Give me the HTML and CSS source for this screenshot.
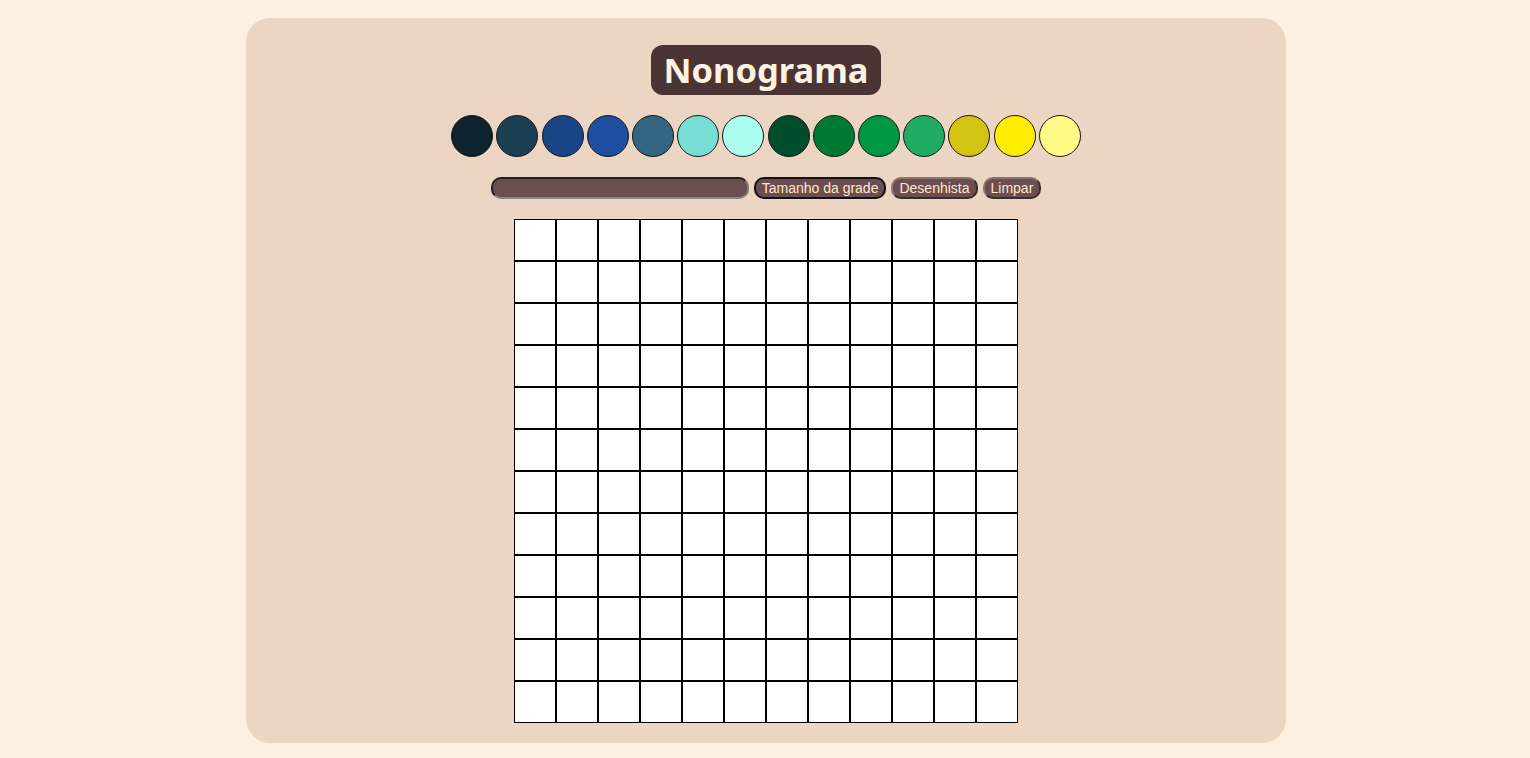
FILE: index.html
```html
<!DOCTYPE html>
<html lang="pt">
<head>
<meta charset="utf-8">
<title>Nonograma</title>
<link rel="stylesheet" href="styles.css">
</head>
<body>
<main class="app">
  <h1 class="title">Nonograma</h1>
  <div class="palette">
    <span class="swatch c1"></span><span class="swatch c2"></span><span class="swatch c3"></span><span class="swatch c4"></span><span class="swatch c5"></span><span class="swatch c6"></span><span class="swatch c7"></span><span class="swatch c8"></span><span class="swatch c9"></span><span class="swatch c10"></span><span class="swatch c11"></span><span class="swatch c12"></span><span class="swatch c13"></span><span class="swatch c14"></span>
  </div>
  <div class="controls">
    <input class="size-input" type="text">
    <button class="btn btn-active">Tamanho da grade</button>
    <button class="btn">Desenhista</button>
    <button class="btn">Limpar</button>
  </div>
  <div class="board" id="board"></div>
</main>
<script>
  var b = document.getElementById('board');
  for (var i = 0; i < 144; i++) { var d = document.createElement('div'); d.className = 'cell'; b.appendChild(d); }
</script>
</body>
</html>
```
FILE: styles.css
```css
html, body { margin: 0; padding: 0; }
body {
  background: #fef0e1;
  font-family: "Liberation Sans", Arial, sans-serif;
  padding-top: 18px;
}
.app {
  width: 1040px;
  height: 725px;
  margin: 0 auto 0 246px;
  background: #edd5c4;
  border-radius: 24px;
  display: flex;
  flex-direction: column;
  align-items: center;
  box-sizing: border-box;
  padding-top: 27px;
}
.title {
  margin: 0;
  background: #4a3434;
  color: #fff2e2;
  font-family: "Noto Sans", "Open Sans", sans-serif;
  font-weight: 700;
  font-size: 34.5px;
  line-height: 50px;
  height: 50px;
  padding: 0 12px;
  border-radius: 12px;
}
.palette {
  display: flex;
  gap: 3.2px;
  margin-top: 20px;
}
.swatch {
  width: 40px;
  height: 40px;
  border-radius: 50%;
  border: 1px solid #1a1a1a;
  display: block;
}
.c1 { background: #0d2330; }
.c2 { background: #1c3e52; }
.c3 { background: #174585; }
.c4 { background: #1e4e9e; }
.c5 { background: #336580; }
.c6 { background: #76ded4; }
.c7 { background: #aafdef; }
.c8 { background: #004d2c; }
.c9 { background: #017935; }
.c10 { background: #009744; }
.c11 { background: #21ac64; }
.c12 { background: #d2c413; }
.c13 { background: #ffed00; }
.c14 { background: #fffb87; }
.controls {
  display: flex;
  align-items: center;
  gap: 5px;
  margin-top: 20px;
}
.size-input {
  width: 258px;
  height: 22px;
  box-sizing: border-box;
  background: #6b4e4e;
  border: 2px solid #222;
  border-right-color: #777;
  border-bottom-color: #888;
  border-radius: 10px;
  padding: 0;
}
.btn {
  height: 22px;
  box-sizing: border-box;
  background: #6b4e4e;
  color: #ffe6d4;
  font-family: "Liberation Sans", Arial, sans-serif;
  font-size: 14px;
  line-height: 16px;
  padding: 0 6px;
  border: 2px outset #8a7575;
  border-radius: 10px;
}
.btn-active {
  border: 2px solid #111;
}
.board {
  display: grid;
  grid-template-columns: repeat(12, 42px);
  grid-auto-rows: 42px;
  margin-top: 20px;
}
.cell {
  background: #fff;
  border: 1px solid #000;
}
```
